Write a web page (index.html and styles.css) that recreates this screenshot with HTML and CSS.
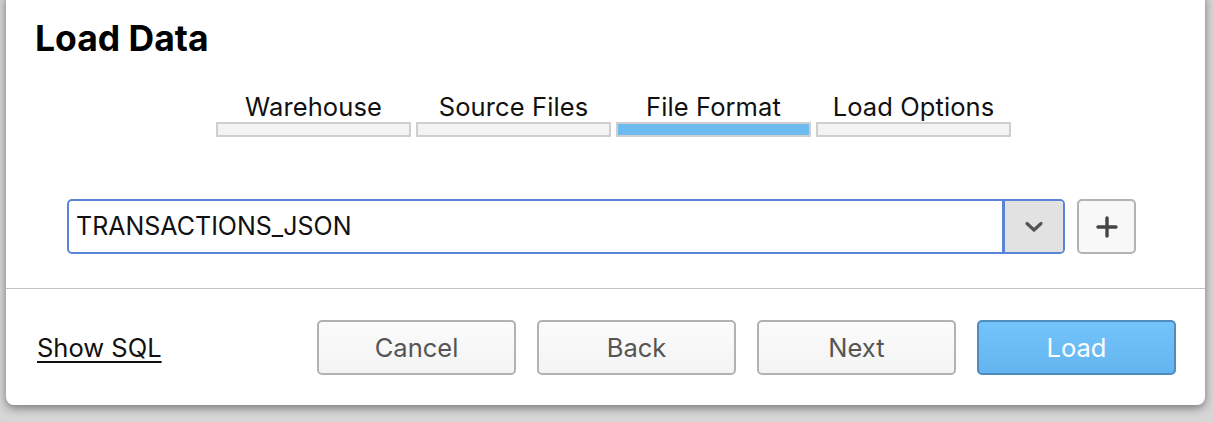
FILE: index.html
```html
<!DOCTYPE html>
<html>
<head>
<meta charset="utf-8">
<link rel="stylesheet" href="styles.css">
</head>
<body>
<div class="dialog">
  <h1 class="title">Load Data</h1>
  <div class="steps">
    <div class="step"><span class="step-label">Warehouse</span><span class="step-bar"></span></div>
    <div class="step"><span class="step-label">Source Files</span><span class="step-bar"></span></div>
    <div class="step"><span class="step-label">File Format</span><span class="step-bar active"></span></div>
    <div class="step"><span class="step-label">Load Options</span><span class="step-bar"></span></div>
  </div>
  <div class="content">
    <div class="select">
      <span class="select-value">TRANSACTIONS_JSON</span>
      <span class="select-arrow">
        <svg width="20" height="12" viewBox="0 0 20 12"><path d="M3 2.5 L10 9 L17 2.5" fill="none" stroke="#555" stroke-width="3.2" stroke-linecap="round" stroke-linejoin="round"/></svg>
      </span>
    </div>
    <button class="add-btn">
      <svg width="22" height="22" viewBox="0 0 22 22"><path d="M11 2 V20 M2 11 H20" stroke="#444" stroke-width="3.4" stroke-linecap="round"/></svg>
    </button>
  </div>
  <div class="footer">
    <a class="show-sql">Show SQL</a>
    <div class="buttons">
      <button class="btn">Cancel</button>
      <button class="btn">Back</button>
      <button class="btn">Next</button>
      <button class="btn primary">Load</button>
    </div>
  </div>
</div>
</body>
</html>
```
FILE: styles.css
```css
html, body {
  margin: 0;
  padding: 0;
}
body {
  width: 1214px;
  height: 422px;
  overflow: hidden;
  background: #d6d6d6;
  font-family: Inter, "Noto Sans", sans-serif;
  color: #111;
}
.dialog {
  box-sizing: border-box;
  margin-left: 6px;
  margin-top: -8px;
  width: 1199px;
  height: 413px;
  background: #fff;
  border-radius: 8px;
  box-shadow: 0 3px 10px rgba(0,0,0,0.45);
  padding-top: 8px;
  display: flex;
  flex-direction: column;
}
.title {
  margin: 0;
  padding: 19px 0 0 29px;
  font-size: 35.5px;
  font-weight: 700;
  line-height: 40px;
  color: #000;
}
.steps {
  display: flex;
  gap: 5px;
  margin: 33px 0 0 210px;
}
.step {
  width: 195px;
  display: flex;
  flex-direction: column;
  align-items: center;
}
.step-label {
  font-size: 25.5px;
  line-height: 30px;
  letter-spacing: 0.1px;
  color: #111;
}
.step-bar {
  box-sizing: border-box;
  width: 195px;
  height: 15px;
  margin-top: 0;
  border: 2px solid #cfcfcf;
  background: #f3f3f3;
}
.step-bar.active {
  background: #6dbbef;
}
.content {
  display: flex;
  align-items: center;
  gap: 12px;
  margin: 62px 0 0 61px;
  height: 55px;
}
.select {
  box-sizing: border-box;
  width: 998px;
  height: 55px;
  border: 2.5px solid #5a84d6;
  border-radius: 5px;
  display: flex;
  overflow: hidden;
}
.select-value {
  flex: 1;
  padding-left: 7px;
  font-size: 25px;
  line-height: 50px;
  color: #111;
}
.select-arrow {
  width: 58px;
  border-left: 3px solid #5a84d6;
  background: #e2e2e2;
  display: flex;
  align-items: center;
  justify-content: center;
}
.add-btn {
  box-sizing: border-box;
  width: 59px;
  height: 55px;
  border: 2px solid #b3b3b3;
  border-radius: 5px;
  background: #f8f8f8;
  display: flex;
  align-items: center;
  justify-content: center;
  padding: 0;
}
.footer {
  margin-top: 34px;
  border-top: 1px solid #c2c2c2;
  display: flex;
  align-items: center;
  justify-content: space-between;
  padding: 31px 29px 0 31px;
}
.show-sql {
  font-size: 25.5px;
  color: #111;
  text-decoration: underline;
  text-underline-offset: 4px;
  text-decoration-thickness: 2px;
}
.buttons {
  display: flex;
  gap: 21px;
}
.btn {
  box-sizing: border-box;
  width: 199px;
  height: 55px;
  border: 2px solid #b2b2b2;
  border-radius: 5px;
  background: linear-gradient(#fbfbfb, #f4f4f4);
  font-family: Inter, "Noto Sans", sans-serif;
  font-size: 25.5px;
  color: #555;
  padding: 0;
}
.btn.primary {
  background: linear-gradient(#73c4fb, #64b4ef);
  border-color: #4f8dbf;
  color: #fff;
}
```
